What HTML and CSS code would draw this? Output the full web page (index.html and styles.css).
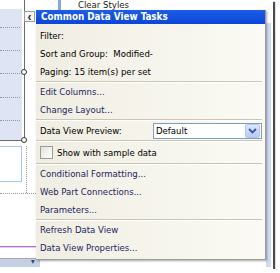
FILE: index.html
```html
<!DOCTYPE html>
<html>
<head>
<meta charset="utf-8">
<link rel="stylesheet" href="styles.css">
</head>
<body>
<div class="frame">
  <div class="shot">
    <div class="canvas">
      <div class="zone">
        <div class="dots d1"></div>
        <div class="dots d2"></div>
        <div class="dots d3"></div>
        <div class="dots d4"></div>
        <div class="dots d5"></div>
      </div>
      <div class="sel-v"></div>
      <div class="sel-h"></div>
      <div class="handle h1"></div>
      <div class="handle h2"></div>
      <div class="top-bar"></div>
      <span class="clear">Clear Styles</span>
      <div class="cell"></div>
      <div class="dot-v"></div>
      <div class="dot-h"></div>
      <div class="pink"></div>
      <div class="toolbar"><span class="tb-btn">&#9662;</span></div>
      <div class="right-strip"></div>
    </div>

    <button class="collapse" type="button">&lsaquo;</button>

    <div class="tasks">
      <div class="title">Common Data View Tasks</div>
      <div class="body">
        <div class="group first">
          <div class="row label">Filter:</div>
          <div class="row label">Sort and Group:&nbsp;&nbsp;Modified-</div>
          <div class="row label">Paging: 15 item(s) per set</div>
        </div>
        <div class="sep"></div>
        <div class="group">
          <div class="row link">Edit Columns...</div>
          <div class="row link">Change Layout...</div>
        </div>
        <div class="sep"></div>
        <div class="row preview">
          <span class="label">Data View Preview:</span>
          <div class="select"><span class="sel-text">Default</span><span class="sel-btn"><svg width="9" height="6" viewBox="0 0 9 6"><path d="M1 1 L4.5 4.5 L8 1" fill="none" stroke="#3553a8" stroke-width="1.8"/></svg></span></div>
        </div>
        <div class="sep"></div>
        <div class="row check-row">
          <span class="check"></span>
          <span class="label">Show with sample data</span>
        </div>
        <div class="sep"></div>
        <div class="group">
          <div class="row link">Conditional Formatting...</div>
          <div class="row link">Web Part Connections...</div>
          <div class="row link">Parameters...</div>
        </div>
        <div class="sep"></div>
        <div class="group">
          <div class="row link">Refresh Data View</div>
          <div class="row link">Data View Properties...</div>
        </div>
      </div>
    </div>
  </div>
</div>
</body>
</html>
```

FILE: styles.css
```css
* { box-sizing: border-box; }
html, body { margin: 0; padding: 0; background: #ffffff; }
body {
  font-family: "DejaVu Sans Condensed", "Liberation Sans", Arial, sans-serif;
  font-size: 9.5px;
}

.frame {
  width: 273px;
  height: 269px;
  background: #ffffff;
  box-shadow: 2px 2px 1px #4a4a4a;
}
.shot {
  position: relative;
  width: 271px;
  height: 267px;
  overflow: hidden;
  background: #ffffff;
}

/* design surface behind the popup */
.canvas { position: absolute; inset: 0; }
.zone {
  position: absolute; left: 0; top: 9px; width: 22px; height: 131px;
  background: #dfe4f5;
}
.dots { position: absolute; left: 0; right: 2px; border-top: 1px dotted #8c96b4; }
.d1 { top: 18px; } .d2 { top: 41px; } .d3 { top: 64px; } .d4 { top: 88px; } .d5 { top: 111px; }
.sel-v { position: absolute; left: 24px; top: 0; width: 1px; height: 141px; background: #6b6b6b; }
.sel-h { position: absolute; left: 0; top: 140px; width: 25px; height: 1px; background: #6b6b6b; }
.handle {
  position: absolute; width: 6px; height: 6px; left: 21px;
  background: #ffffff; border: 1px solid #333333; border-radius: 50%;
}
.h1 { top: 69px; } .h2 { top: 137px; }
.top-bar { position: absolute; left: 58px; top: 0; width: 3px; height: 11px; background: #8aa6dc; }
.clear { position: absolute; left: 78px; top: -1px; color: #222222; line-height: 11px; }
.cell {
  position: absolute; left: 0; top: 146px; width: 22px; height: 36px;
  border: 1px solid #a9c6e6; border-left: none;
}
.dot-v { position: absolute; left: 26px; top: 146px; height: 47px; border-left: 1px dotted #9a9a9a; }
.dot-h { position: absolute; left: 0; top: 193px; width: 36px; border-top: 1px dotted #9a9a9a; }
.pink { position: absolute; left: 0; top: 246px; width: 36px; height: 2px; border-top: 1px solid #b46ed2; background: #e6cdf0; }
.toolbar {
  position: absolute; left: 0; top: 258px; width: 40px; height: 9px;
  background: #c4cfe2; border-top: 1px solid #9aa9c4;
}
.tb-btn { position: absolute; left: 31px; top: -2px; font-size: 8px; color: #34446a; }
.right-strip { position: absolute; left: 266px; top: 23px; width: 5px; bottom: 0; background: #cddbf2; }

/* collapse button */
.collapse {
  position: absolute; left: 24px; top: 11px; width: 11px; height: 11px;
  margin: 0; padding: 0;
  background: #f6f6f6; border: 1px solid #9c9c9c;
  font-family: "Liberation Sans", Arial, sans-serif; font-size: 12px; font-weight: bold;
  line-height: 8px; color: #222222;
}

/* tasks popup */
.tasks {
  position: absolute; left: 36px; top: 10px; width: 230px; height: 250px;
  background: linear-gradient(to right, #f0eee3, #fbfaf4);
  border-right: 1px solid #9d9d9d;
  border-bottom: 1px solid #9d9d9d;
  box-shadow: 1px 1px 2px rgba(0,0,0,0.35);
  display: flex; flex-direction: column;
}
.title {
  height: 14px; padding-left: 5px;
  background: linear-gradient(#1e5de6, #0a46d8);
  color: #ffffff; font-weight: bold; line-height: 14px;
  font-family: "DejaVu Sans Condensed", "Liberation Sans", Arial, sans-serif; font-size: 9.8px;
}
.body { display: flex; flex-direction: column; padding-top: 3px; }
.group { display: flex; flex-direction: column; }
.row { height: 18px; line-height: 18px; padding-left: 4px; white-space: nowrap; }
.label { color: #000000; }
.link { color: #1d1d5e; }
.sep {
  height: 2px; margin: 0 3px 0 0;
  border-top: 1px solid #c9c6b6; border-bottom: 1px solid #ffffff;
}
.preview { display: flex; align-items: center; height: 19px; padding-right: 3px; }
.select {
  margin-left: auto; width: 109px; height: 16px;
  display: flex; align-items: center;
  background: #ffffff; border: 1px solid #7f9db9;
}
.sel-text { flex: 1; padding-left: 2px; line-height: 14px; color: #000000; }
.sel-btn {
  width: 15px; height: 14px; margin-right: 1px;
  display: flex; align-items: center; justify-content: center;
  background: linear-gradient(#dbe6fd, #b8cbf5);
  border: 1px solid #b5c8f2; border-radius: 2px;
}
.check-row { display: flex; align-items: center; height: 21px; gap: 4px; }
.check {
  width: 13px; height: 13px;
  background: linear-gradient(135deg, #e4e3dc, #ffffff);
  border: 1px solid #9a9a9a;
}
```
